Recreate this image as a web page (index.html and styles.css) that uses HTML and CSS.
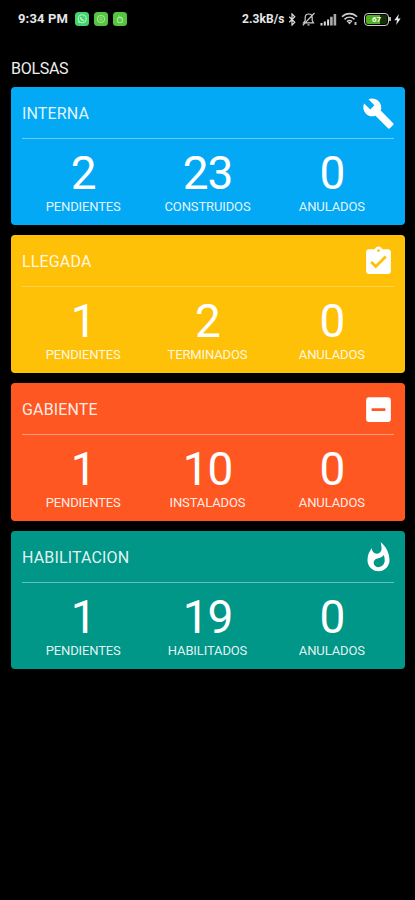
FILE: index.html
```html
<!DOCTYPE html>
<html lang="es">
<head>
<meta charset="utf-8">
<meta name="viewport" content="width=device-width, initial-scale=1">
<title>Bolsas</title>
<link rel="stylesheet" href="styles.css">
</head>
<body>
<header class="status">
  <div class="status-left">
    <span class="time">9:34 PM</span>
    <svg class="app" viewBox="0 0 14 14"><rect width="14" height="14" rx="3.5" fill="#43d56c"/><circle cx="7.2" cy="6.8" r="4" fill="none" stroke="#b5f3c5" stroke-width="1.1"/><path d="M3 11l.8-2.6L5.600 10.300z" fill="#b5f3c5"/><path d="M5.400 5c.2 2 1.600 3.400 3.600 3.700" fill="none" stroke="#b5f3c5" stroke-width="1.200"/></svg>
    <svg class="app" viewBox="0 0 14 14"><rect width="14" height="14" rx="3.5" fill="#55c541"/><circle cx="7" cy="7" r="3.500" fill="none" stroke="#a5e48f" stroke-width="1.100"/><path d="M5.500 6h3M5.500 8h3" stroke="#a5e48f"/></svg>
    <svg class="app" viewBox="0 0 14 14"><rect width="14" height="14" rx="3.5" fill="#55c541"/><path d="M6 3.500v3M8 4.500v3" stroke="#a5e48f"/><circle cx="7" cy="8" r="2.700" fill="none" stroke="#a5e48f" stroke-width="1.100"/></svg>
  </div>
  <div class="status-right">
    <span class="speed">2.3kB/s</span>
    <svg class="bt" viewBox="0 0 8 14"><path d="M1 4l6 6-3 3V1l3 3-6 6" fill="none" stroke="#ddd" stroke-width="1.300"/></svg>
    <svg class="bell" viewBox="0 0 13 14"><path d="M1.500 10.800h10L10.200 8.500V5.500a3.500 3.500 0 0 0-7 0v3zM5.500 12.800h2M12.500 1L.8 13.300" fill="none" stroke="#ccc" stroke-width="1.200"/></svg>
    <svg class="signal" viewBox="0 0 17 13"><path d="M1.500 10v2.500M4.800 8.500v4M8.100 6.500v6" stroke="#ddd" stroke-width="2"/><path d="M11.400 3.800v8.700M14.900 1v11.500" stroke="#aaa" stroke-width="2.600"/></svg>
    <svg class="wifi" viewBox="0 0 17 14"><path d="M1 4.800c4.200-4.200 10.800-4.200 15 0M3.500 7.300c3-2.800 7-2.800 10 0M6 9.700c1.500-1.400 3.500-1.400 5 0" fill="none" stroke="#ccc" stroke-width="1.600"/><path d="M6.500 10l2 2.500 2-2.500z" fill="#ccc"/><path d="M14.500 10v3" stroke="#bbb" stroke-width="2"/></svg>
    <div class="battery"><span>67</span></div>
    <svg class="bolt" viewBox="0 0 7 12"><path d="M5 0L0 6.800h3L2 12l5-7H4z" fill="#e8e8e8"/></svg>
  </div>
</header>
<main>
  <h1>BOLSAS</h1>
  <section class="card blue">
    <div class="head"><h2>INTERNA</h2><svg class="icon" viewBox="0 0 24 24"><path d="M22.700 19l-9.100-9.100c.9-2.300.4-5-1.500-6.900-2-2-5-2.400-7.400-1.300L9 6 6 9 1.600 4.700C.4 7.100.9 10.100 2.900 12.100c1.900 1.900 4.600 2.400 6.900 1.500l9.100 9.100c.4.4 1 .4 1.400 0l2.300-2.300c.5-.4.5-1.100.1-1.400z"/></svg></div>
    <div class="stats">
      <div><b>2</b><span>PENDIENTES</span></div><div><b>23</b><span>CONSTRUIDOS</span></div><div><b>0</b><span>ANULADOS</span></div>
    </div>
  </section>
  <section class="card amber">
    <div class="head"><h2>LLEGADA</h2><svg class="icon" viewBox="0 0 24 24"><path d="M19 3h-4.180C14.400 1.840 13.300 1 12 1c-1.300 0-2.400.84-2.820 2H5c-1.100 0-2 .9-2 2v14c0 1.100.9 2 2 2h14c1.100 0 2-.9 2-2V5c0-1.100-.9-2-2-2zm-7 0c.55 0 1 .45 1 1s-.45 1-1 1-1-.45-1-1 .45-1 1-1zm-2 14l-4-4 1.410-1.410L10 14.170l6.590-6.590L18 9l-8 8z"/></svg></div>
    <div class="stats">
      <div><b>1</b><span>PENDIENTES</span></div><div><b>2</b><span>TERMINADOS</span></div><div><b>0</b><span>ANULADOS</span></div>
    </div>
  </section>
  <section class="card orange">
    <div class="head"><h2>GABIENTE</h2><svg class="icon" viewBox="0 0 24 24"><path d="M19 3H5c-1.100 0-2 .9-2 2v14c0 1.100.9 2 2 2h14c1.100 0 2-.9 2-2V5c0-1.100-.9-2-2-2zm-2 10H7v-2h10v2z"/></svg></div>
    <div class="stats">
      <div><b>1</b><span>PENDIENTES</span></div><div><b>10</b><span>INSTALADOS</span></div><div><b>0</b><span>ANULADOS</span></div>
    </div>
  </section>
  <section class="card teal">
    <div class="head"><h2>HABILITACION</h2><svg class="icon" viewBox="0 0 24 24"><path d="M13.500.67s.74 2.650.74 4.800c0 2.060-1.350 3.730-3.410 3.730-2.070 0-3.630-1.670-3.630-3.730l.03-.36C5.210 7.510 4 10.620 4 14c0 4.420 3.580 8 8 8s8-3.580 8-8C20 8.610 17.410 3.800 13.500.67zM11.710 19c-1.780 0-3.220-1.400-3.220-3.140 0-1.620 1.050-2.760 2.810-3.120 1.770-.36 3.600-1.210 4.620-2.580.39 1.290.59 2.650.59 4.040 0 2.650-2.150 4.800-4.800 4.800z"/></svg></div>
    <div class="stats">
      <div><b>1</b><span>PENDIENTES</span></div><div><b>19</b><span>HABILITADOS</span></div><div><b>0</b><span>ANULADOS</span></div>
    </div>
  </section>
</main>
</body>
</html>
```
FILE: styles.css
```css
* { box-sizing: border-box; }
body {
  margin: 0;
  min-height: 900px;
  background: #000;
  color: #fff;
  font-family: Roboto, "Liberation Sans", sans-serif;
}
.status {
  height: 38px;
  padding: 0 14px 0 18px;
  display: flex;
  align-items: center;
  justify-content: space-between;
}
.status-left, .status-right { display: flex; align-items: center; }
.time, .speed { font-weight: 700; color: #e6e6e6; white-space: nowrap; line-height: 16px; }
.time { width: 51px; font-size: 13px; letter-spacing: .15px; margin-right: 6px; }
.speed { font-size: 12px; width: 43px; letter-spacing: .1px; margin-right: 3px; }
.app { width: 14px; height: 14px; margin-right: 5px; }
.bt { width: 8px; height: 13px; margin-right: 6px; }
.bell { width: 13px; height: 14px; margin-right: 5px; }
.signal { width: 17px; height: 13px; margin-right: 4px; }
.wifi { width: 17px; height: 14px; margin-right: 6px; }
.battery {
  position: relative;
  width: 25px;
  height: 13px;
  margin-right: 5px;
  border: 1.500px solid #ccc;
  border-radius: 4px;
  background: linear-gradient(90deg, #4fae1c 65%, #123006 65%) content-box;
  padding: 1px;
  font-size: 8px;
  font-weight: 700;
  line-height: 9px;
  text-align: center;
}
.battery::after {
  content: "";
  position: absolute;
  right: -3px;
  top: 3px;
  width: 2px;
  height: 4px;
  background: #bbb;
}
.battery span { display: block; }
.bolt { width: 7px; height: 11px; }
main { padding: 21px 10px 0 11px; }
h1, h2 { margin: 0; font-weight: 400; font-size: 16px; line-height: 20px; }
h1 { margin-bottom: 8px; color: #eee; letter-spacing: -.3px; }
.card {
  height: 138px;
  margin-bottom: 10px;
  padding: 0 11px;
  border-radius: 4px;
}
.blue { background: #03a9f4; }
.amber { background: #ffc107; }
.orange { background: #ff5722; }
.teal { background: #009688; }
.head {
  height: 52px;
  padding-top: 2px;
  display: flex;
  align-items: center;
  justify-content: space-between;
  border-bottom: 1px solid rgba(255, 255, 255, .4);
}
.amber .head { border-bottom-color: rgba(255, 255, 255, .28); }
h2 { color: rgba(255, 255, 255, .9); letter-spacing: .15px; }
.icon { width: 33px; height: 33px; margin: 0 -.5px 1px 0; fill: #fff; }
.stats {
  display: grid;
  grid-template-columns: repeat(3, 1fr);
  margin: 0 0 0 -1px;
  padding-top: 9px;
  text-align: center;
}
.stats b { display: block; font-size: 46px; line-height: 50px; font-weight: 400; letter-spacing: -1px; }
.stats span { display: block; margin-top: 1px; font-size: 13px; line-height: 16px; letter-spacing: -.12px; color: rgba(255, 255, 255, .9); }
```
